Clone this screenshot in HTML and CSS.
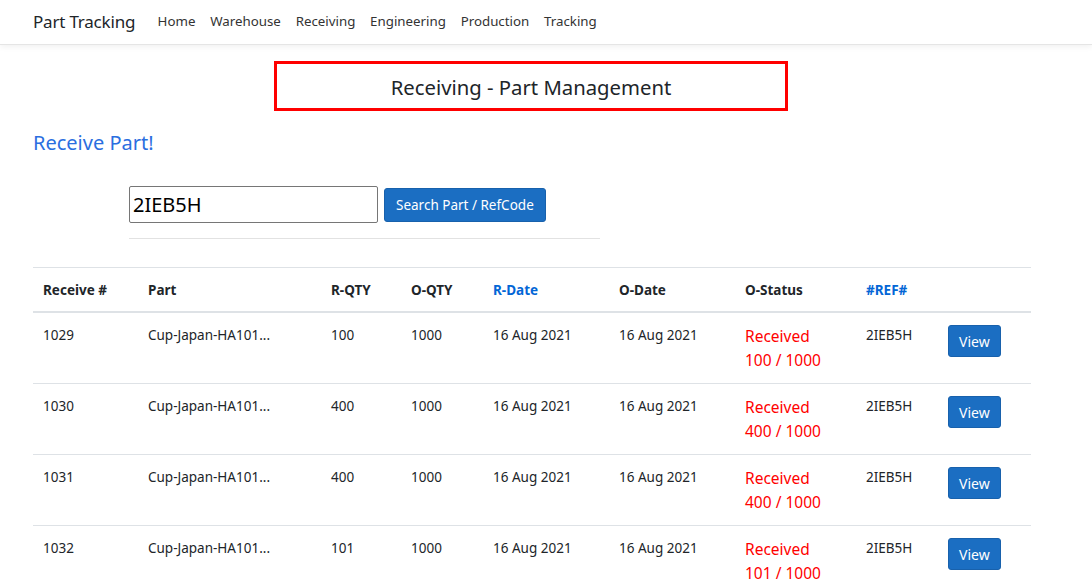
FILE: index.html
```html
<!DOCTYPE html>
<html>
<head>
<meta charset="utf-8">
<link rel="stylesheet" href="styles.css">
</head>
<body>
<header class="navbar">
  <a class="brand">Part Tracking</a>
  <nav class="nav">
    <a>Home</a><a>Warehouse</a><a>Receiving</a><a>Engineering</a><a>Production</a><a>Tracking</a>
  </nav>
</header>
<main class="container">
  <div class="title-wrap"><div class="title-box">Receiving - Part Management</div></div>
  <h3 class="subtitle">Receive Part!</h3>
  <div class="search">
    <div class="search-row">
      <input class="search-input" type="text" value="2IEB5H">
      <button class="btn">Search Part / RefCode</button>
    </div>
    <hr class="rule">
  </div>
  <table class="table">
    <colgroup>
      <col class="c1"><col class="c2"><col class="c3"><col class="c4"><col class="c5"><col class="c6"><col class="c7"><col class="c8"><col class="c9">
    </colgroup>
    <thead>
      <tr><th>Receive #</th><th>Part</th><th>R-QTY</th><th>O-QTY</th><th class="link">R-Date</th><th>O-Date</th><th>O-Status</th><th class="link">#REF#</th><th></th></tr>
    </thead>
    <tbody>
      <tr><td>1029</td><td>Cup-Japan-HA101...</td><td>100</td><td>1000</td><td>16 Aug 2021</td><td>16 Aug 2021</td><td class="status">Received<br>100 / 1000</td><td>2IEB5H</td><td><button class="btn view">View</button></td></tr>
      <tr><td>1030</td><td>Cup-Japan-HA101...</td><td>400</td><td>1000</td><td>16 Aug 2021</td><td>16 Aug 2021</td><td class="status">Received<br>400 / 1000</td><td>2IEB5H</td><td><button class="btn view">View</button></td></tr>
      <tr><td>1031</td><td>Cup-Japan-HA101...</td><td>400</td><td>1000</td><td>16 Aug 2021</td><td>16 Aug 2021</td><td class="status">Received<br>400 / 1000</td><td>2IEB5H</td><td><button class="btn view">View</button></td></tr>
      <tr><td>1032</td><td>Cup-Japan-HA101...</td><td>101</td><td>1000</td><td>16 Aug 2021</td><td>16 Aug 2021</td><td class="status">Received<br>101 / 1000</td><td>2IEB5H</td><td><button class="btn view">View</button></td></tr>
    </tbody>
  </table>
</main>
</body>
</html>
```
FILE: styles.css
```css
* { box-sizing: border-box; }
html, body { margin: 0; padding: 0; }
body {
  font-family: "Noto Sans", "Open Sans", sans-serif;
  font-size: 14px;
  color: #212529;
  background: #fff;
  overflow: hidden;
}
.navbar {
  height: 45px;
  display: flex;
  align-items: center;
  padding: 0 33px 2px 33px;
  border-bottom: 1px solid #e5e5e5;
  box-shadow: 0 2px 6px rgba(0,0,0,.06);
}
.brand {
  font-size: 17px;
  color: #212529;
  margin-right: 15px;
  letter-spacing: -0.2px;
}
.nav { display: flex; gap: 0; }
.nav a {
  padding: 0 7.4px;
  color: #333;
  font-size: 13.3px;
}
.container { padding: 16px 33px 0 33px; }
.title-wrap { display: flex; justify-content: center; padding-right: 30px; }
.title-box {
  width: 514px;
  height: 50px;
  border: 3px solid #ff0000;
  display: flex;
  align-items: center;
  justify-content: center;
  font-size: 20.3px;
  color: #212529;
  padding-top: 1px;
}
.subtitle {
  margin: 17px 0 0 0;
  font-size: 20px;
  font-weight: 400;
  color: #2a6ee0;
  line-height: 30px;
}
.search { margin: 28px 0 0 96px; width: 471px; }
.search-row { display: flex; align-items: center; gap: 6px; }
.search-input {
  width: 249px;
  height: 37px;
  border: 1px solid #767676;
  border-radius: 2px;
  font-family: inherit;
  font-size: 20px;
  padding: 0 3px;
  color: #000;
}
.btn {
  background: #1b6ec2;
  border: 1px solid #1861ac;
  color: #fff;
  font-family: inherit;
  font-size: 13.5px;
  border-radius: 3px;
  height: 34px;
  padding: 0 11px;
}
.rule { border: 0; border-top: 1px solid #e2e2e2; margin: 15px 0 0 0; }
.table {
  margin-top: 28px;
  width: 998px;
  border-collapse: collapse;
  table-layout: fixed;
}
.c1 { width: 105px; } .c2 { width: 183px; } .c3 { width: 80px; } .c4 { width: 82px; }
.c5 { width: 126px; } .c6 { width: 126px; } .c7 { width: 121px; } .c8 { width: 82px; } .c9 { width: 93px; }
.table th, .table td {
  text-align: left;
  vertical-align: top;
  padding: 12px 10px 10px 10px;
  border-top: 1px solid #dee2e6;
  line-height: 21px;
}
.table th { font-weight: 700; font-size: 13.5px; border-bottom: 2px solid #dee2e6; }
.table td { font-size: 13.5px; }
.table th.link { color: #0366d6; }
.table td.status { color: #ff0000; font-size: 15.5px; line-height: 24px; padding-top: 11px; padding-bottom: 11px; }
.view { height: 32px; padding: 0 10px; font-size: 14px; margin-top: 0; }
```
